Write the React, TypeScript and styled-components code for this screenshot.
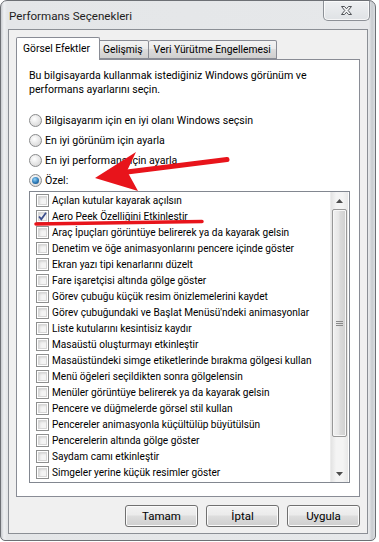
import React from 'react';
import styled, { createGlobalStyle } from 'styled-components';

const GlobalStyle = createGlobalStyle`
  html, body {
    margin: 0;
    padding: 0;
    background: #ffffff;
  }
  body {
    font-family: Roboto, "Noto Sans", sans-serif;
    font-size: 10.6px;
    color: #000000;
  }
`;

const Stage = styled.div`
  position: relative;
  width: 379px;
  height: 542px;
  overflow: hidden;
`;

const Window = styled.div`
  box-sizing: border-box;
  width: 376px;
  height: 541px;
  display: flex;
  flex-direction: column;
  padding: 0 7px 6px 7px;
  border: 1px solid #6d7075;
  border-radius: 7px 7px 5px 5px;
  background: linear-gradient(90deg, #c9ccd0 0px, #eef0f2 3px, #e4e6e8 6px, #e6e8ea calc(100% - 6px), #c8cbcf calc(100% - 3px), #dcdfe2 100%);
`;

const TitleBar = styled.div`
  height: 28px;
  display: flex;
  align-items: flex-start;
  justify-content: space-between;
`;

const Title = styled.div`
  padding: 8px 0 0 1px;
  font-size: 11.6px;
  color: #1e1e1e;
`;

const CloseButton = styled.div`
  box-sizing: border-box;
  width: 47px;
  height: 20px;
  margin-right: -2px;
  display: flex;
  align-items: center;
  justify-content: center;
  border: 1px solid #8c9096;
  border-top: none;
  border-radius: 0 0 5px 5px;
  background: linear-gradient(#eef0f2, #dfe2e5);
  box-shadow: inset 0 0 0 1px rgba(255, 255, 255, 0.7);
`;

const Client = styled.div`
  flex: 1;
  display: flex;
  flex-direction: column;
  padding: 7px 7px 0 7px;
  background: #f0f0f0;
  border: 1px solid #8b8f95;
`;

const TabRow = styled.div`
  display: flex;
  align-items: flex-end;
  height: 22px;
  padding-left: 2px;
  position: relative;
  z-index: 1;
  font-size: 10.3px;
`;

const Tab = styled.div<{ $active?: boolean }>`
  box-sizing: border-box;
  height: ${(p) => (p.$active ? '23px' : '19px')};
  margin: ${(p) => (p.$active ? '0 -2px -1px -2px' : '0')};
  padding: ${(p) => (p.$active ? '4px 9px 0 6px' : '2px 5px 0 5px')};
  border: 1px solid #898c95;
  border-bottom: ${(p) => (p.$active ? 'none' : '1px solid #898c95')};
  border-left: ${(p) => (p.$active ? '1px solid #898c95' : 'none')};
  border-radius: 2px 2px 0 0;
  background: ${(p) => (p.$active ? '#ffffff' : 'linear-gradient(#f3f3f3, #ebebeb 45%, #dddddd 50%, #cfcfcf)')};
  white-space: nowrap;
  position: relative;
  z-index: ${(p) => (p.$active ? 2 : 1)};

  &:first-child {
    border-left: 1px solid #898c95;
  }
`;

const Panel = styled.div`
  box-sizing: border-box;
  height: 438px;
  padding: 9px 0 0 12px;
  background: #ffffff;
  border: 1px solid #898c95;
`;

const Description = styled.div`
  width: 300px;
  line-height: 14px;
`;

const RadioGroup = styled.div`
  margin-top: 13px;
  display: flex;
  flex-direction: column;
`;

const RadioRow = styled.div`
  height: 20px;
  display: flex;
  align-items: center;
  gap: 3px;
`;

const RadioCircle = styled.span<{ $checked?: boolean }>`
  box-sizing: border-box;
  width: 13px;
  height: 13px;
  border-radius: 50%;
  border: 1px solid #8a8b8c;
  background: radial-gradient(circle at 40% 35%, #ffffff, #e2e2e2 60%, #cfcfcf);
  display: flex;
  align-items: center;
  justify-content: center;

  &::after {
    content: '';
    display: ${(p) => (p.$checked ? 'block' : 'none')};
    width: 7px;
    height: 7px;
    border-radius: 50%;
    background: radial-gradient(circle at 40% 35%, #8fd1f8, #2c79b6 55%, #123f6b);
  }
`;

const ListBox = styled.div`
  box-sizing: border-box;
  margin-top: 1px;
  width: 321px;
  height: 292px;
  border: 1px solid #828790;
  display: flex;
`;

const Items = styled.div`
  flex: 1;
  min-width: 0;
  padding: 0 0 0 6px;
  display: flex;
  flex-direction: column;
  font-size: 10.1px;
`;

const ItemRow = styled.div`
  height: 16px;
  display: flex;
  align-items: center;
  gap: 3px;
  white-space: nowrap;
  overflow: hidden;
`;

const CheckBox = styled.span`
  box-sizing: border-box;
  flex: none;
  width: 13px;
  height: 13px;
  border: 1px solid #8e8f8f;
  background: #f4f4f4;
  box-shadow: inset 0 0 0 1px #ffffff, inset 0 0 0 2px #d7d7d7, inset 2px 2px 3px #b9b9b9;
  display: flex;
  align-items: center;
  justify-content: center;
`;

const ScrollBar = styled.div`
  flex: none;
  width: 17px;
  margin-right: 1px;
  display: flex;
  flex-direction: column;
  background: linear-gradient(90deg, #e3e3e3, #f4f4f4 30%, #f4f4f4 70%, #e8e8e8);
  border-left: 1px solid #ececec;
`;

const ArrowButton = styled.div`
  height: 17px;
  display: flex;
  align-items: center;
  justify-content: center;
`;

const Track = styled.div`
  flex: 1;
  display: flex;
  flex-direction: column;
  padding: 0 1px 0 1px;
`;

const Thumb = styled.div`
  box-sizing: border-box;
  height: 228px;
  border: 1px solid #979797;
  border-radius: 2px;
  background: linear-gradient(90deg, #f1f1f1, #e6e6e6 45%, #dadada 55%, #d0d0d0);
  box-shadow: inset 0 0 0 1px #f7f7f7;
  display: flex;
  align-items: center;
  justify-content: center;
`;

const ButtonRow = styled.div`
  display: flex;
  justify-content: flex-end;
  gap: 8px;
  padding: 8px 0 0 0;
`;

const Button = styled.div`
  box-sizing: border-box;
  width: 73px;
  height: 22px;
  border: 1px solid #707070;
  border-radius: 3px;
  background: linear-gradient(#f2f2f2, #ebebeb 45%, #dddddd 50%, #cfcfcf);
  box-shadow: inset 0 0 0 1px #fbfbfb;
  display: flex;
  align-items: center;
  justify-content: center;
  font-size: 11.5px;
  padding-bottom: 1px;
`;

const Overlay = styled.svg`
  position: absolute;
  left: 0;
  top: 0;
  pointer-events: none;
`;

const options = [
  { label: 'Bilgisayarım için en iyi olanı Windows seçsin', checked: false },
  { label: 'En iyi görünüm için ayarla', checked: false },
  { label: 'En iyi performans için ayarla', checked: false },
  { label: 'Özel:', checked: true },
];

const effects = [
  'Açılan kutular kayarak açılsın',
  'Aero Peek Özelliğini Etkinleştir',
  'Araç İpuçları görüntüye belirerek ya da kayarak gelsin',
  'Denetim ve öğe animasyonlarını pencere içinde göster',
  'Ekran yazı tipi kenarlarını düzelt',
  'Fare işaretçisi altında gölge göster',
  'Görev çubuğu küçük resim önizlemelerini kaydet',
  "Görev çubuğundaki ve Başlat Menüsü'ndeki animasyonlar",
  'Liste kutularını kesintisiz kaydır',
  'Masaüstü oluşturmayı etkinleştir',
  'Masaüstündeki simge etiketlerinde bırakma gölgesi kullan',
  'Menü öğeleri seçildikten sonra gölgelensin',
  'Menüler görüntüye belirerek ya da kayarak gelsin',
  'Pencere ve düğmelerde görsel stil kullan',
  'Pencereler animasyonla küçültülüp büyütülsün',
  'Pencerelerin altında gölge göster',
  'Saydam camı etkinleştir',
  'Simgeler yerine küçük resimler göster',
];

const App: React.FC = () => {
  return (
    <>
      <GlobalStyle />
      <Stage>
        <Window>
          <TitleBar>
            <Title>Performans Seçenekleri</Title>
            <CloseButton>
              <svg width="13" height="11" viewBox="0 0 13 11">
                <path
                  d="M1.5 1.5 L4.5 1.5 L6.5 3.8 L8.5 1.5 L11.5 1.5 L8.2 5.5 L11.5 9.5 L8.5 9.5 L6.5 7.2 L4.5 9.5 L1.5 9.5 L4.8 5.5 Z"
                  fill="#f4f5f6"
                  stroke="#4f5257"
                  strokeWidth="1"
                  strokeLinejoin="round"
                />
              </svg>
            </CloseButton>
          </TitleBar>
          <Client>
            <TabRow>
              <Tab $active>Görsel Efektler</Tab>
              <Tab>Gelişmiş</Tab>
              <Tab>Veri Yürütme Engellemesi</Tab>
            </TabRow>
            <Panel>
              <Description>
                Bu bilgisayarda kullanmak istediğiniz Windows görünüm ve performans ayarlarını seçin.
              </Description>
              <RadioGroup>
                {options.map((o) => (
                  <RadioRow key={o.label}>
                    <RadioCircle $checked={o.checked} />
                    {o.label}
                  </RadioRow>
                ))}
              </RadioGroup>
              <ListBox>
                <Items>
                  {effects.map((label, i) => (
                    <ItemRow key={label}>
                      <CheckBox>
                        {i === 1 && (
                          <svg width="9" height="9" viewBox="0 0 9 9">
                            <path d="M1 4.5 L3.3 7.2 L8 0.8" fill="none" stroke="#3c4f8c" strokeWidth="1.8" />
                          </svg>
                        )}
                      </CheckBox>
                      {label}
                    </ItemRow>
                  ))}
                </Items>
                <ScrollBar>
                  <ArrowButton>
                    <svg width="7" height="4" viewBox="0 0 7 4">
                      <path d="M0 4 L3.5 0 L7 4 Z" fill="#4d4d4d" />
                    </svg>
                  </ArrowButton>
                  <Track>
                    <Thumb>
                      <svg width="7" height="7" viewBox="0 0 7 7">
                        <path d="M0 1.5 H7 M0 3.5 H7 M0 5.5 H7" stroke="#8a8a8a" strokeWidth="1" />
                      </svg>
                    </Thumb>
                  </Track>
                  <ArrowButton>
                    <svg width="7" height="4" viewBox="0 0 7 4">
                      <path d="M0 0 L7 0 L3.5 4 Z" fill="#4d4d4d" />
                    </svg>
                  </ArrowButton>
                </ScrollBar>
              </ListBox>
            </Panel>
            <ButtonRow>
              <Button>Tamam</Button>
              <Button>İptal</Button>
              <Button>Uygula</Button>
            </ButtonRow>
          </Client>
        </Window>
        <Overlay width="379" height="542" viewBox="0 0 379 542">
          <path d="M36 224 L202 221.5" stroke="#e8141b" strokeWidth="3.5" strokeLinecap="round" />
          <path d="M127 172 L227 159.5" stroke="#e8141b" strokeWidth="5" strokeLinecap="round" />
          <path d="M95 178 L136 152 L127 171 L138 191 Z" fill="#e8141b" />
        </Overlay>
      </Stage>
    </>
  );
};

export default App;
